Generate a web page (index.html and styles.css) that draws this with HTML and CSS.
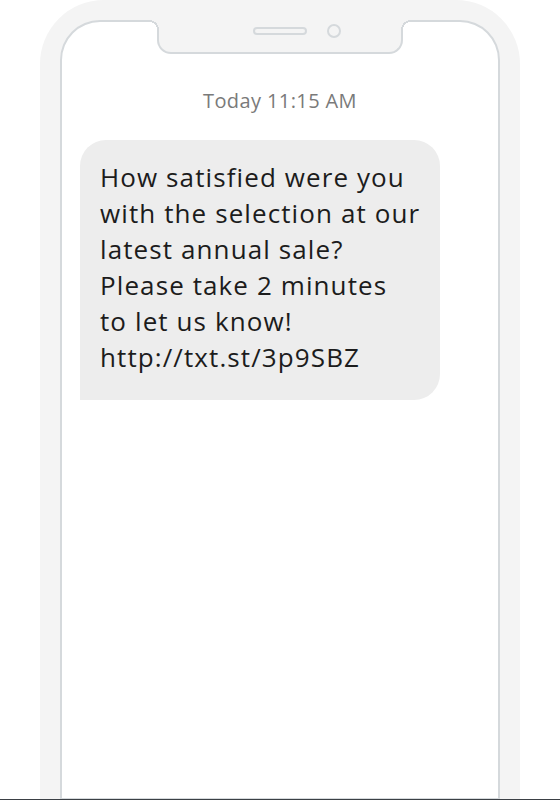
FILE: index.html
```html
<!DOCTYPE html>
<html lang="en">
  <head>
    <meta charset="UTF-8" />
    <meta name="viewport" content="width=device-width, initial-scale=1.0" />
    <title>Text Message</title>
    <link rel="stylesheet" href="styles.css">
  </head>
  <body>
    <div class="page">
      <div class="phone">
        <div class="screen">
          <div class="notch">
            <span class="speaker"></span>
            <span class="camera"></span>
          </div>

          <div class="time">Today 11:15 AM</div>

          <div class="bubble">
            How satisfied were you with the selection at our latest annual sale?<br>
            Please take 2 minutes to&nbsp;let us know!<br>
            http://txt.st/3p9SBZ
          </div>
        </div>
      </div>
    </div>
  </body>
</html>
```

FILE: styles.css
```css
body {
  margin: 0;
  background-color: white;
  font-family: "Open Sans", Lato, sans-serif;
  overflow: hidden;
}
.page {
  height: 800px;
  border-bottom: 1px solid #3b4045;
  box-sizing: border-box;
}
.phone {
  margin: 0 40px;
  height: 799px;
  padding: 20px 20px 0;
  background-color: #f4f4f4;
  border-radius: 64px 64px 0 0;
  box-sizing: border-box;
}
.screen {
  position: relative;
  height: 100%;
  background-color: white;
  border: 2px solid #d5d9dc;
  border-bottom-width: 1px;
  border-radius: 40px 40px 0 0;
  box-sizing: border-box;
}
.notch {
  position: absolute;
  top: -2px;
  left: 95px;
  width: 246px;
  height: 34px;
  display: flex;
  align-items: center;
  justify-content: center;
  gap: 20px;
  padding: 0 0 10px 34px;
  background-color: #f4f4f4;
  border: 2px solid #d5d9dc;
  border-top: none;
  border-radius: 0 0 14px 14px;
  box-sizing: border-box;
}
.notch::before,
.notch::after {
  content: "";
  position: absolute;
  top: 0;
  width: 10px;
  height: 10px;
}
.notch::before {
  left: -10px;
  background: radial-gradient(circle at 0 100%, #fff 0 8px, #d5d9dc 8px 10px, #f4f4f4 10px);
}
.notch::after {
  right: -10px;
  background: radial-gradient(circle at 100% 100%, #fff 0 8px, #d5d9dc 8px 10px, #f4f4f4 10px);
}
.speaker {
  width: 54px;
  height: 8px;
  border: 2px solid #d5d9dc;
  border-radius: 6px;
  box-sizing: border-box;
}
.camera {
  width: 14px;
  height: 14px;
  border: 2px solid #d5d9dc;
  border-radius: 50%;
  box-sizing: border-box;
}
.time {
  padding-top: 67px;
  text-align: center;
  font-size: 20px;
  line-height: 24px;
  letter-spacing: 0.4px;
  color: #7a7a7a;
}
.bubble {
  width: 360px;
  margin: 27px 0 0 18px;
  padding: 19px 16px 25px 20px;
  background-color: #ededed;
  border-radius: 26px 26px 26px 0;
  font-size: 26px;
  line-height: 36px;
  letter-spacing: 1.1px;
  color: #1c1c1c;
  box-sizing: border-box;
}
```
